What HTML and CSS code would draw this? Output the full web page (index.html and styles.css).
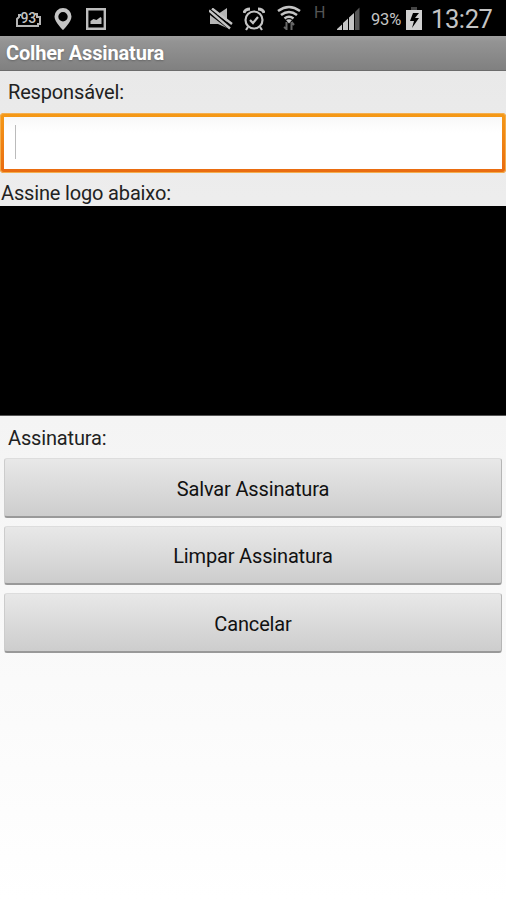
FILE: index.html
```html
<!DOCTYPE html>
<html lang="pt-BR">
<head>
<meta charset="utf-8">
<title>Colher Assinatura</title>
<link rel="stylesheet" href="styles.css">
</head>
<body>
<header class="status">
  <svg class="ic-counter" width="26" height="18" viewBox="0 0 26 18" fill="none" stroke="#b5b5b5" stroke-width="2"><path d="M5 5H3v2L1 9v7h21v-2h2V7h-3V4h-2"/><text x="4.500" y="12.500" class="counter-text">93</text></svg>
  <svg class="ic-pin" width="18" height="22" viewBox="0 0 18 22"><path fill="#c4c4c4" fill-rule="evenodd" d="M9 0a8.500 8.500 0 0 0-8.500 8.500C.5 14 9 22 9 22s8.500-8 8.500-13.500A8.500 8.500 0 0 0 9 0Zm0 4a4.700 4.700 0 1 1 0 9.400A4.700 4.700 0 0 1 9 4Z"/></svg>
  <svg class="ic-picture" width="20" height="22" viewBox="0 0 20 22"><path fill="none" stroke="#bdbdbd" stroke-width="2.400" d="M1.200 1.200h17.600v19.600H1.200z"/><path fill="#bdbdbd" d="M4.500 16v-3l3-2 3 1 4-3 1 1v6z"/></svg>
  <svg class="ic-mute" width="24" height="22" viewBox="0 0 24 22"><path fill="#b5b5b5" d="M1 6h8l9-6v20l-9-4H1z"/><path stroke="#000" stroke-width="5" d="m0 3 22 17"/><path stroke="#c4c4c4" stroke-width="2.400" d="m0 2.500 21 18M3 .5 23 16"/></svg>
  <svg class="ic-alarm" width="22" height="24" viewBox="0 0 22 24" fill="none" stroke="#c4c4c4" stroke-width="2.200"><circle cx="11" cy="13" r="8.500"/><path d="M1 6q1-4 6-4M21 6q-1-4-6-4" stroke-width="3"/><path d="m5 20-2 3m14-3 2 3M7 13l3 3 5-6"/></svg>
  <svg class="ic-wifi" width="24" height="26" viewBox="0 0 24 26" fill="none" stroke="#c4c4c4" stroke-width="2.500"><path d="M1 6q11-8 22 0M4 10q8-6 16 0M7.500 13.500q4.500-3.500 9 0"/><path fill="#c4c4c4" stroke="none" d="M9 15q3-1.500 6 0l-3 3.500z"/><path stroke="#666" stroke-width="2" d="M9.500 25v-8m-2.500 5 2.500 2m5 1v-8m0 0 2.500 3"/></svg>
  <span class="network">H</span>
  <svg class="ic-signal" width="24" height="23" viewBox="0 0 24 23" fill="#c4c4c4"><path d="M0 23v-1l5-4.500V23zM6 23v-7l5-4.500V23zM12 23V10.500L17 6v17z"/><path fill="#555" d="M18 23V5l4.500-4.500V23z"/></svg>
  <span class="percent">93%</span>
  <svg class="ic-battery" width="16" height="24" viewBox="0 0 16 24"><path fill="#444" d="M5 0h6v3H5z"/><path fill="#d0d0d0" d="M0 3h16v20H0z"/><path fill="#000" d="M7 6 4 14h4l-2 7 7-10H9l4-5z"/></svg>
  <span class="clock">13:27</span>
</header>
<h1 class="title">Colher Assinatura</h1>
<main class="form">
  <label class="label" for="responsavel">Responsável:</label>
  <div class="field"><div class="field-inner" id="responsavel"><span class="caret"></span></div></div>
  <p class="label label-sign">Assine logo abaixo:</p>
  <div class="pad"></div>
  <p class="label label-result">Assinatura:</p>
  <div class="actions">
    <button class="btn">Salvar Assinatura</button>
    <button class="btn">Limpar Assinatura</button>
    <button class="btn">Cancelar</button>
  </div>
</main>
</body>
</html>
```
FILE: styles.css
```css
* { box-sizing: border-box; }
body {
  margin: 0;
  height: 900px;
  overflow: hidden;
  display: flex;
  flex-direction: column;
  font-family: Roboto, "Liberation Sans", sans-serif;
  font-size: 20px;
  letter-spacing: -0.16px;
  color: #222;
}
.status {
  height: 36px;
  flex: none;
  display: flex;
  align-items: flex-start;
  background: #000;
  color: #c4c4c4;
}
.status svg, .status span { flex: none; display: block; }
.ic-counter { margin: 10px 0 0 16px; }
.counter-text { font-size: 14px; font-weight: 500; stroke: none; fill: #c4c4c4; }
.ic-pin { margin: 8px 0 0 12px; }
.ic-picture { margin: 8px 0 0 14px; }
.ic-mute { margin: 8px 0 0 103px; }
.ic-alarm { margin: 7px 0 0 10px; }
.ic-wifi { margin: 5px 0 0 12px; }
.network { width: 12px; margin: 4px 0 0 13px; font-size: 16px; line-height: 18px; color: #555; }
.ic-signal { margin: 7px 0 0 11px; }
.percent { width: 36px; margin: 10px 0 0 10px; font-size: 16.500px; line-height: 20px; }
.ic-battery { margin: 7px 0 0 -1px; }
.clock { margin: 4px 0 0 9px; font-size: 25.500px; line-height: 30px; letter-spacing: -0.4px; white-space: nowrap; }
.title {
  height: 35px;
  flex: none;
  margin: 0;
  padding-left: 6px;
  font-size: 20px;
  font-weight: 700;
  line-height: 35px;
  color: #fff;
  background: linear-gradient(#a0a0a0, #949494 15%, #808080);
  border-bottom: 1px solid #6c6c6c;
  text-shadow: 0 1px 2px #666;
}
.form {
  flex: 1;
  display: flex;
  flex-direction: column;
  background: linear-gradient(#e9e9e9, #f4f4f4 42%, #fff);
}
.label { flex: none; margin: 0; height: 42px; padding-left: 8px; line-height: 42px; }
.field {
  height: 60px;
  flex: none;
  padding: 4px;
  border-radius: 4px;
  background: linear-gradient(#f59a17, #e96a10);
  box-shadow: inset 0 0 0 1px #f4ae4d;
}
.field-inner { height: 100%; padding: 8px 11px; background: linear-gradient(#f8f8f8, #fff 30%); }
.caret { display: block; width: 1px; height: 34px; background: #bbb; }
.label-sign { height: 33px; padding-left: 1px; line-height: 41px; }
.pad { height: 210px; flex: none; background: #000; border-bottom: 1px solid #555; }
.label-result { line-height: 44px; }
.actions { display: grid; gap: 8px; padding: 0 4px; }
.btn {
  height: 59.500px;
  padding: 3px 0 0;
  border: 1px solid #ccc;
  border-top-color: #ddd;
  border-right-color: #b5b5b5;
  border-bottom: 2px solid #999;
  border-radius: 3px;
  background: linear-gradient(#e8e8e8, #cdcdcd);
  font: inherit;
  letter-spacing: inherit;
  color: #111;
}
```
